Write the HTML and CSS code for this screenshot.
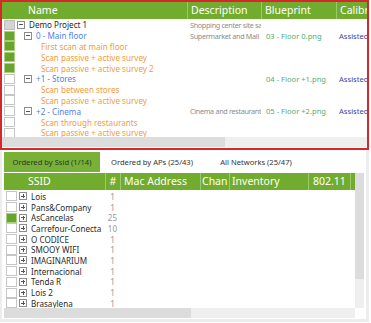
FILE: index.html
```html
<!DOCTYPE html>
<html lang="en">
<head>
    <meta charset="UTF-8">
    <title>Survey Projects</title>
    <link rel="stylesheet" href="styles.css">
</head>
<body>
    <!-- Project tree -->
    <div class="tree-panel">
        <div class="head">
            <div class="hc c-name">Name</div>
            <div class="hc c-desc">Description</div>
            <div class="hc c-blue">Blueprint</div>
            <div class="hc c-cal">Calibr</div>
        </div>
        <div class="rows">
            <div class="row"><span class="cb gray"></span><div class="c-name lv0"><span class="exp minus"></span><span class="t-proj">Demo Project 1</span></div><div class="c-desc">Shopping center site sample</div><div class="c-blue"></div><div class="c-cal"></div></div>
            <div class="row"><span class="cb on"></span><div class="c-name lv1"><span class="exp minus"></span><span class="t-floor">0 - Main floor</span></div><div class="c-desc">Supermarket and Mall</div><div class="c-blue">03 - Floor 0.png</div><div class="c-cal">Assisted</div></div>
            <div class="row"><span class="cb on"></span><div class="c-name lv2"><span class="t-scan">First scan at main floor</span></div><div class="c-desc"></div><div class="c-blue"></div><div class="c-cal"></div></div>
            <div class="row"><span class="cb on"></span><div class="c-name lv2"><span class="t-scan">Scan passive + active survey</span></div><div class="c-desc"></div><div class="c-blue"></div><div class="c-cal"></div></div>
            <div class="row"><span class="cb on"></span><div class="c-name lv2"><span class="t-scan">Scan passive + active survey 2</span></div><div class="c-desc"></div><div class="c-blue"></div><div class="c-cal"></div></div>
            <div class="row"><span class="cb"></span><div class="c-name lv1"><span class="exp minus"></span><span class="t-floor">+1 - Stores</span></div><div class="c-desc"></div><div class="c-blue">04 - Floor +1.png</div><div class="c-cal">Assisted</div></div>
            <div class="row"><span class="cb"></span><div class="c-name lv2"><span class="t-scan">Scan between stores</span></div><div class="c-desc"></div><div class="c-blue"></div><div class="c-cal"></div></div>
            <div class="row"><span class="cb"></span><div class="c-name lv2"><span class="t-scan">Scan passive + active survey</span></div><div class="c-desc"></div><div class="c-blue"></div><div class="c-cal"></div></div>
            <div class="row"><span class="cb"></span><div class="c-name lv1"><span class="exp minus"></span><span class="t-floor">+2 - Cinema</span></div><div class="c-desc">Cinema and restaurants</div><div class="c-blue">05 - Floor +2.png</div><div class="c-cal">Assisted</div></div>
            <div class="row"><span class="cb"></span><div class="c-name lv2"><span class="t-scan">Scan through restaurants</span></div><div class="c-desc"></div><div class="c-blue"></div><div class="c-cal"></div></div>
            <div class="row"><span class="cb"></span><div class="c-name lv2"><span class="t-scan">Scan passive + active survey</span></div><div class="c-desc"></div><div class="c-blue"></div><div class="c-cal"></div></div>
        </div>
        <div class="hscroll"><div class="thumb top-thumb"></div></div>
    </div>

    <!-- Networks -->
    <div class="net-panel">
        <div class="tabs">
            <div class="tab active">Ordered by Ssid (1/14)</div>
            <div class="tab">Ordered by APs (25/43)</div>
            <div class="tab">All Networks (25/47)</div>
        </div>
        <div class="net-body">
            <div class="net-main">
                <div class="head net-head">
                    <div class="hc n-ssid">SSID</div>
                    <div class="hc n-num">#</div>
                    <div class="hc n-mac">Mac Address</div>
                    <div class="hc n-chan">Chan</div>
                    <div class="hc n-inv">Inventory</div>
                    <div class="hc n-std">802.11</div>
                    <div class="hc n-end"></div>
                </div>
                <div class="net-rows">
                    <div class="nrow"><span class="cb"></span><span class="exp plus"></span><span class="n-name">Lois</span><span class="n-count">1</span></div>
                    <div class="nrow"><span class="cb"></span><span class="exp plus"></span><span class="n-name">Pans&amp;Company</span><span class="n-count">1</span></div>
                    <div class="nrow"><span class="cb on"></span><span class="exp plus"></span><span class="n-name">AsCancelas</span><span class="n-count">25</span></div>
                    <div class="nrow"><span class="cb"></span><span class="exp plus"></span><span class="n-name">Carrefour-Conecta</span><span class="n-count">10</span></div>
                    <div class="nrow"><span class="cb"></span><span class="exp plus"></span><span class="n-name">O CODICE</span><span class="n-count">1</span></div>
                    <div class="nrow"><span class="cb"></span><span class="exp plus"></span><span class="n-name">SMOOY WIFI</span><span class="n-count">1</span></div>
                    <div class="nrow"><span class="cb"></span><span class="exp plus"></span><span class="n-name">IMAGINARIUM</span><span class="n-count">1</span></div>
                    <div class="nrow"><span class="cb"></span><span class="exp plus"></span><span class="n-name">Internacional</span><span class="n-count">1</span></div>
                    <div class="nrow"><span class="cb"></span><span class="exp plus"></span><span class="n-name">Tenda R</span><span class="n-count">1</span></div>
                    <div class="nrow"><span class="cb"></span><span class="exp plus"></span><span class="n-name">Lois 2</span><span class="n-count">1</span></div>
                    <div class="nrow"><span class="cb"></span><span class="exp plus"></span><span class="n-name">Brasaylena</span><span class="n-count">1</span></div>
                </div>
                <div class="hscroll low"><div class="thumb low-thumb"></div></div>
            </div>
            <div class="vscroll"><div class="vthumb"></div><div class="corner"></div></div>
        </div>
    </div>
</body>
</html>
```

FILE: styles.css
```css
* {
    box-sizing: border-box;
    margin: 0;
    padding: 0;
}

body {
    font-family: 'Noto Sans', 'Open Sans', sans-serif;
    background: #fff;
    width: 371px;
    height: 323px;
    overflow: hidden;
}

/* ---------- shared bits ---------- */

.head {
    display: flex;
    height: 17px;
    background: #72ac2f;
    color: #fff;
    font-size: 10.5px;
    line-height: 17px;
    white-space: nowrap;
    overflow: hidden;
}

.hc {
    flex: none;
    overflow: hidden;
    border-left: 1px solid #9cc96c;
}

.cb {
    flex: none;
    display: inline-block;
    width: 11px;
    height: 10px;
    border: 1px solid #c6c6c6;
    background: #fff;
}

.cb.on {
    background: #6aa52b;
    border-color: #a8cc80;
}

.cb.gray {
    background: #d4d4d4;
    border-color: #bdbdbd;
}

.exp {
    flex: none;
    position: relative;
    display: inline-block;
    width: 8px;
    height: 8px;
    border: 1px solid #8c8c8c;
    background: #fff;
}

.exp::before {
    content: "";
    position: absolute;
    left: 1px;
    right: 1px;
    top: 2.5px;
    height: 1px;
    background: #555;
}

.exp.plus::after {
    content: "";
    position: absolute;
    top: 1px;
    bottom: 1px;
    left: 2.5px;
    width: 1px;
    background: #555;
}

.hscroll {
    height: 10px;
    background: #efefef;
}

.thumb {
    height: 100%;
    background: #dcdcdc;
}

/* ---------- project tree ---------- */

.tree-panel {
    width: 369px;
    height: 150px;
    border: 2px solid #d8272c;
    overflow: hidden;
}

.head .c-name {
    border-left: none;
    padding-left: 26px;
}

.c-name {
    width: 185px;
}

.c-desc {
    width: 74px;
}

.c-blue {
    width: 75px;
}

.c-cal {
    width: 40px;
}

.head .c-desc,
.head .c-blue,
.head .c-cal {
    padding-left: 3px;
}

.rows {
    height: 118px;
    padding-top: 0.5px;
    overflow: hidden;
}

.row {
    display: flex;
    align-items: center;
    height: 10.8px;
    font-size: 8.1px;
    white-space: nowrap;
}

.row .cb {
    margin-left: 2px;
    margin-right: -13px;
}

.row > div {
    flex: none;
    overflow: hidden;
    display: flex;
    align-items: center;
}

.lv0 {
    padding-left: 15px;
}

.lv1 {
    padding-left: 22px;
}

.lv2 {
    padding-left: 39px;
}

.row .exp {
    margin-right: 4px;
}

.t-proj {
    color: #2a2a2a;
}

.t-floor {
    color: #557fe2;
}

.t-scan {
    color: #f39c3c;
}

.row .c-desc {
    color: #8c8c8c;
    font-size: 7.2px;
    letter-spacing: -0.3px;
    padding-left: 3px;
}

.row .c-blue {
    color: #52ad74;
    font-size: 7.6px;
    padding-left: 5px;
}

.row .c-cal {
    color: #3e3fa2;
    font-size: 7.6px;
    padding-left: 3px;
}

.top-thumb {
    width: 223px;
}

/* ---------- networks ---------- */

.net-panel {
    width: 369px;
    height: 171px;
    margin-top: 1px;
    border: 3px solid #ededed;
    border-top: none;
    border-left-width: 2px;
    background: #fff;
}

.tabs {
    display: flex;
    height: 21px;
    padding-left: 2px;
    padding-top: 1px;
    font-size: 7.6px;
    color: #333;
    white-space: nowrap;
}

.tab {
    flex: none;
    display: flex;
    align-items: center;
    justify-content: center;
    width: 100px;
}

.tab.active {
    width: 96px;
    background: #78b136;
}

.tab + .tab {
    width: 104px;
}

.net-body {
    display: flex;
    margin-top: 1px;
    padding-left: 2px;
}

.net-main {
    width: 351px;
}

.net-head .n-ssid {
    border-left: none;
    width: 101px;
    padding-left: 24px;
}

.n-num {
    width: 15px;
    text-align: center;
}

.n-mac {
    width: 80px;
    padding-left: 3px;
}

.n-chan {
    width: 29px;
    padding-left: 1px;
}

.n-inv {
    width: 79px;
    padding-left: 2px;
}

.n-std {
    width: 42px;
    padding-left: 4px;
}

.n-end {
    width: 5px;
}

.net-rows {
    height: 118px;
    padding-top: 1px;
    overflow: hidden;
}

.nrow {
    display: flex;
    align-items: center;
    height: 10.7px;
    font-size: 8.1px;
    color: #2a2a2a;
    white-space: nowrap;
}

.nrow .cb {
    margin-left: 2px;
}

.nrow .exp {
    margin-left: 2px;
}

.n-name {
    width: 78px;
    padding-left: 4px;
    overflow: hidden;
}

.n-count {
    width: 15px;
    text-align: center;
    color: #999;
}

.low-thumb {
    width: 187px;
}

.vscroll {
    display: flex;
    flex-direction: column;
    width: 9px;
    height: 145px;
    background: #efefef;
}

.vthumb {
    height: 106px;
    background: #dcdcdc;
}

.corner {
    margin-top: auto;
    height: 10px;
    background: #fff;
}
```
